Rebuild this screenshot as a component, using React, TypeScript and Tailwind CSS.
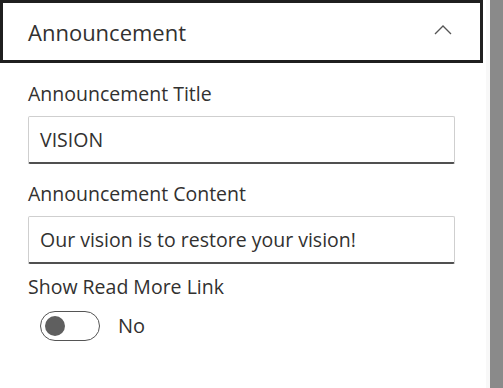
import React from "react";

export default function App() {
  return (
    <div className="flex w-[503px] h-[388px] bg-white overflow-hidden" style={{ fontFamily: '"Open Sans", "Noto Sans", sans-serif' }}>
      <div className="w-[486px] flex flex-col">
        <div className="w-[483px] h-[63px] border-[3px] border-[#1f1f1f] flex items-center justify-between pl-[25px] pr-[28px] text-[#323130]">
          <span className="text-[22px] leading-none">Announcement</span>
          <svg width="18" height="10" viewBox="0 0 18 10" fill="none" className="-mt-[3px]">
            <path d="M1 9 L9 1 L17 9" stroke="#555" strokeWidth="1.3" />
          </svg>
        </div>
        <div className="pl-[28px] pr-[31px] flex flex-col text-[#323130]">
          <div className="mt-[18px] text-[19.5px] leading-[26px]">Announcement Title</div>
          <div className="mt-[9px] h-[48px] border border-[#cfcfcf] border-b-2 border-b-[#505050] rounded-[2px] flex items-center pl-[11px] text-[19.5px]">VISION</div>
          <div className="mt-[17px] text-[19.5px] leading-[26px]">Announcement Content</div>
          <div className="mt-[9px] h-[48px] border border-[#cfcfcf] border-b-2 border-b-[#505050] rounded-[2px] flex items-center pl-[11px] text-[19.5px]">Our vision is to restore your vision!</div>
          <div className="mt-[10px] text-[19.5px] leading-[26px]">Show Read More Link</div>
          <div className="mt-[11px] flex items-center">
            <div className="ml-[12px] w-[60px] h-[30px] rounded-full border border-[#555] flex items-center pl-[4px]">
              <div className="w-[20px] h-[20px] rounded-full bg-[#5f5f5f]" />
            </div>
            <span className="ml-[18px] text-[20px]">No</span>
          </div>
        </div>
      </div>
      <div className="w-[4px] h-full bg-[#f8f8f8]" />
      <div className="w-[13px] h-full bg-[#8a8a8a]" />
    </div>
  );
}
